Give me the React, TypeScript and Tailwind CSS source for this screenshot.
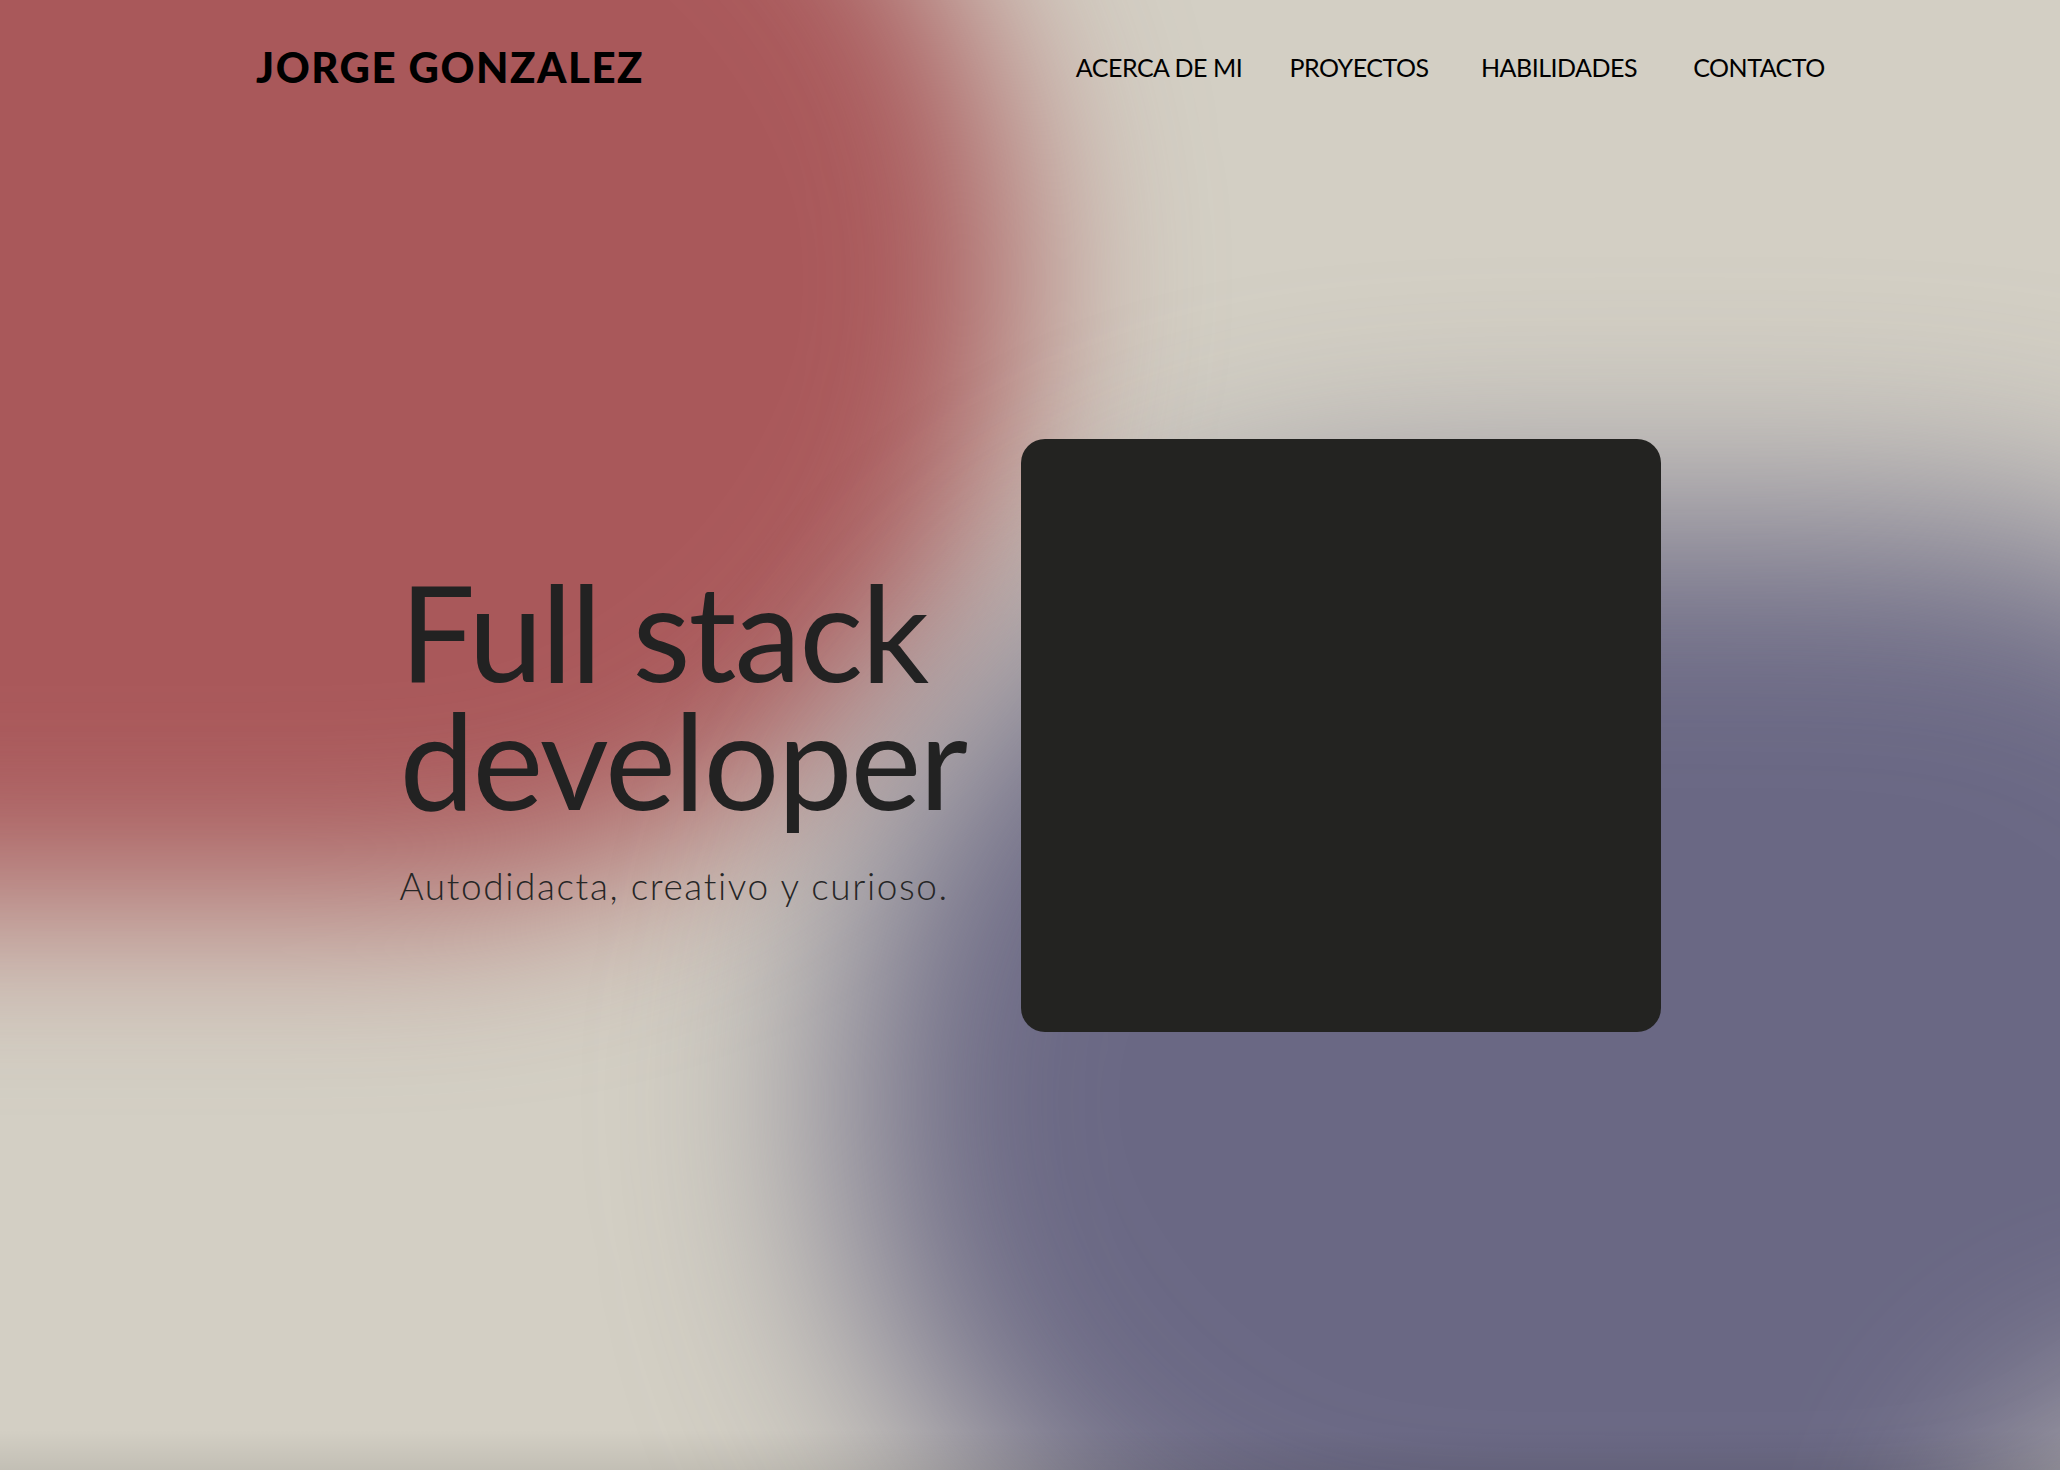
import React from "react";

const navItems = ["ACERCA DE MI", "PROYECTOS", "HABILIDADES", "CONTACTO"];

export default function App() {
  return (
    <div
      className="relative w-full h-[1470px] overflow-hidden bg-[#d3cfc4]"
      style={{ fontFamily: "Lato, 'Noto Sans', sans-serif" }}
    >
      {/* background blobs */}
      <div className="pointer-events-none absolute inset-0">
        <div className="absolute left-[-780px] top-[-340px] w-[1800px] h-[1240px] rounded-full bg-[#a9585a] blur-[90px]" />
        <div className="absolute left-[840px] top-[520px] w-[1640px] h-[1160px] rounded-full bg-[#6a6884] blur-[110px]" />
        <div className="absolute left-[1960px] top-[1380px] w-[520px] h-[480px] rounded-full bg-[#d3cfc4] opacity-70 blur-[100px]" />
        <div className="absolute left-0 right-0 bottom-0 h-[40px] bg-gradient-to-b from-transparent to-[#00000014]" />
      </div>

      {/* header */}
      <header className="absolute top-0 left-0 right-0 z-10 flex items-center justify-between pl-[256px] pr-[201px] h-[134px]">
        <div className="text-[42px] font-black tracking-[1.5px] text-black leading-none">
          JORGE GONZALEZ
        </div>
        <nav className="flex">
          {navItems.map((n) => (
            <a
              key={n}
              className="w-[200px] text-center text-[25px] text-black tracking-[-0.5px] leading-none"
            >
              {n}
            </a>
          ))}
        </nav>
      </header>

      {/* hero */}
      <main className="relative z-10 flex h-full items-center justify-center gap-[43px]">
        <div className="w-[578px]">
          <h1 className="text-[134px] font-normal leading-[128px] tracking-[-2px] text-[#222222]">
            Full stack
            <br />
            developer
          </h1>
          <p className="mt-[44px] text-[37px] font-light text-[#262626] tracking-[1.6px] leading-none whitespace-nowrap">
            Autodidacta, creativo y curioso.
          </p>
        </div>
        <div className="w-[640px] h-[593px] rounded-[24px] bg-[#232321]" />
      </main>
    </div>
  );
}
